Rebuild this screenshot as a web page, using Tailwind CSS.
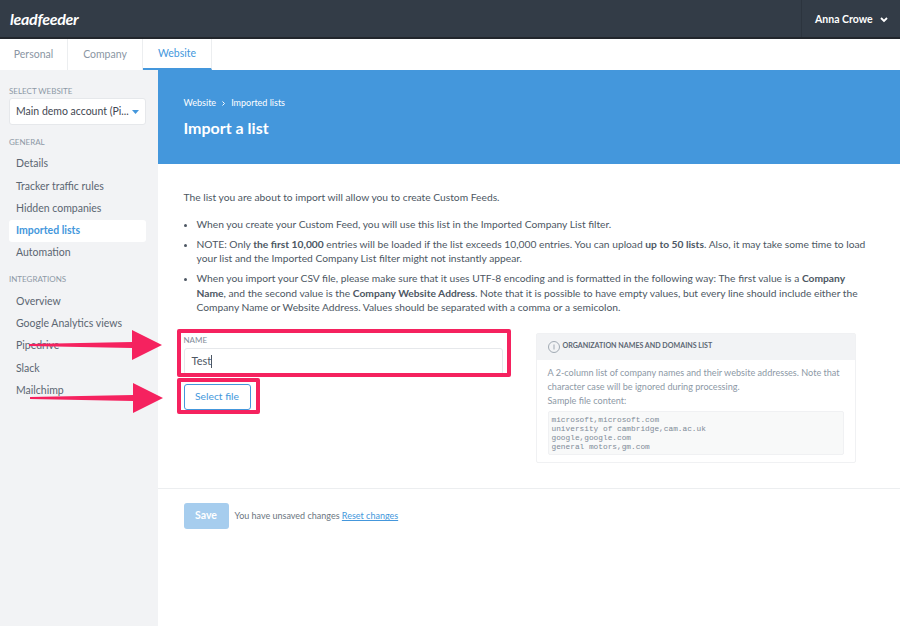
<!DOCTYPE html>
<html lang="en">
<head>
  <meta charset="UTF-8">
  <title>Import a list</title>
  <script src="https://cdn.jsdelivr.net/npm/@tailwindcss/browser@4"></script>
</head>
<body class="relative w-[900px] h-[626px] overflow-hidden bg-white font-['Lato','Liberation_Sans',sans-serif] text-[10.250px] text-[#4d5763]">
  <!-- top bar -->
  <header class="h-[39px] bg-[#333c47] border-b-2 border-[#22262c] flex items-center justify-between">
    <div class="pl-[10px] text-[16px] leading-none font-bold italic text-white tracking-[-0.3px]">leadfeeder</div>
    <div class="h-full w-[99px] border-l border-[#2c343e] flex items-center pl-[13px] pt-[2px] gap-[7px] text-white text-[10.500px] font-bold">
      Anna Crowe
      <svg width="8" height="6" viewBox="0 0 8 6" fill="none" stroke="white" stroke-width="1.8"><path d="M1 1l3 3 3-3"/></svg>
    </div>
  </header>

  <!-- tabs -->
  <nav class="h-[31px] flex text-[10.500px] bg-white">
    <div class="w-[68px] border-r border-[#eceef0] flex items-center justify-center text-[#8a96a3]">Personal</div>
    <div class="w-[75px] border-r border-[#eceef0] flex items-center justify-center text-[#8a96a3]">Company</div>
    <div class="w-[69px] border-r border-[#eceef0] border-b-2 border-b-[#4497dc] flex items-center justify-center text-[#4497dc]">Website</div>
  </nav>

  <div class="flex h-[556px]">
    <!-- sidebar -->
    <aside class="w-[157.500px] shrink-0 bg-[#f2f3f5] pt-[16px] pl-[9px] pr-[11.500px] text-[10.500px]">
      <div class="text-[8px] leading-[10px] text-[#8d99a6]">SELECT WEBSITE</div>
      <div class="mt-[2px] h-[27px] bg-white border border-[#e6e8eb] rounded-[3px] flex items-center justify-between pl-[6px] pr-[6px] text-[#3f4852]">
        <span class="whitespace-nowrap">Main demo account (Pi...</span>
        <svg width="7" height="4" viewBox="0 0 7 4" fill="#4497dc"><path d="M0 0h7L3.500 4z"/></svg>
      </div>
      <div class="mt-[12px] text-[8px] leading-[10px] text-[#8d99a6]">GENERAL</div>
      <ul class="mt-[6px] text-[#5b6672]">
        <li class="h-[22.300px] flex items-center pl-[7px]">Details</li>
        <li class="h-[22.300px] flex items-center pl-[7px]">Tracker traffic rules</li>
        <li class="h-[22.300px] flex items-center pl-[7px]">Hidden companies</li>
        <li class="h-[22.300px] flex items-center pl-[7px] bg-white rounded-[3px] text-[#4497dc] font-bold">Imported lists</li>
        <li class="h-[22.300px] flex items-center pl-[7px]">Automation</li>
      </ul>
      <div class="mt-[10px] text-[8px] leading-[10px] text-[#8d99a6]">INTEGRATIONS</div>
      <ul class="mt-[6px] text-[#5b6672]">
        <li class="h-[22.300px] flex items-center pl-[7px]">Overview</li>
        <li class="h-[22.300px] flex items-center pl-[7px]">Google Analytics views</li>
        <li class="h-[22.300px] flex items-center pl-[7px]">Pipedrive</li>
        <li class="h-[22.300px] flex items-center pl-[7px]">Slack</li>
        <li class="h-[22.300px] flex items-center pl-[7px]">Mailchimp</li>
      </ul>
    </aside>

    <!-- main -->
    <main class="flex-1">
      <section class="h-[94px] bg-[#4497dc] pl-[26px] pt-[27px] text-white">
        <div class="flex items-center gap-[6px] text-[9px] leading-[12px]">
          <span>Website</span>
          <svg width="3" height="5" viewBox="0 0 3 5" fill="none" stroke="white" stroke-width="1"><path d="M.5.500l2 2-2 2"/></svg>
          <span>Imported lists</span>
        </div>
        <h1 class="mt-[9px] text-[16px] leading-[20px] font-bold">Import a list</h1>
      </section>

      <section class="h-[325px] border-b border-[#eceef0] pl-[26px] pr-[30px] pt-[26px]">
        <p class="leading-[14.500px]">The list you are about to import will allow you to create Custom Feeds.</p>
        <ul class="mt-[12px] flex flex-col gap-[5.500px] list-disc pl-[13px] leading-[14.500px]">
          <li>When you create your Custom Feed, you will use this list in the Imported Company List filter.</li>
          <li>NOTE: Only <b>the first 10,000</b> entries will be loaded if the list exceeds 10,000 entries. You can upload <b>up to 50 lists</b>. Also, it may take some time to load your list and the Imported Company List filter might not instantly appear.</li>
          <li>When you import your CSV file, please make sure that it uses UTF-8 encoding and is formatted in the following way: The first value is a <b>Company Name</b>, and the second value is the <b>Company Website Address</b>. Note that it is possible to have empty values, but every line should include either the Company Name or Website Address. Values should be separated with a comma or a semicolon.</li>
        </ul>

        <div class="mt-[19px] flex justify-between w-[672px]">
          <div class="w-[319px] pt-[1px]">
            <div class="text-[8px] leading-[10px] text-[#7f8b98]">NAME</div>
            <div class="mt-[3px] h-[27px] border border-[#e6e8eb] rounded-[3px] flex items-center pl-[7px] text-[11px] text-[#4d5763]">Test<span class="w-px h-[13px] bg-[#4d5763]"></span></div>
            <button class="mt-[9px] w-[67px] h-[26px] border border-[#4497dc] rounded-[3px] text-[#4497dc] text-[10.300px] block">Select file</button>
          </div>
          <div class="-mt-[1px] w-[320px] h-[130px] border border-[#f0f1f3] rounded-[2px] text-[#8d99a6] text-[9.100px]">
            <div class="h-[26px] bg-[#f2f3f5] flex items-center pl-[11px] gap-[3px] text-[7.100px] font-bold text-[#5b6672]">
              <svg width="12" height="12" viewBox="0 0 12 12" fill="none" stroke="#7f8b98" stroke-width="0.7"><circle cx="6" cy="6" r="5.500"/><path d="M6 3.500v5"/></svg>
              ORGANIZATION NAMES AND DOMAINS LIST
            </div>
            <div class="px-[11px] pt-[6px]">
              <p class="leading-[14px]">A 2-column list of company names and their website addresses. Note that character case will be ignored during processing.<br>Sample file content:</p>
              <pre class="mt-[3px] h-[44px] bg-[#f8f9f9] border border-[#f0f1f3] rounded-[2px] px-[3px] pt-[4px] text-[7.800px] leading-[9px] font-['Liberation_Mono',monospace] text-[#7f8b98]">microsoft,microsoft.com
university of cambridge,cam.ac.uk
google,google.com
general motors,gm.com</pre>
            </div>
          </div>
        </div>
      </section>

      <section class="pl-[26px] pt-[14px] flex items-center gap-[6px] text-[9px] text-[#6b7580]">
        <button class="w-[45px] h-[26px] bg-[#a6cdee] rounded-[3px] text-white font-bold text-[10.500px]">Save</button>
        <span>You have unsaved changes <a class="text-[#4497dc] underline">Reset changes</a></span>
      </section>
    </main>
  </div>

  <!-- annotations drawn over the screenshot -->
  <div class="absolute left-[177px] top-[329px] w-[334px] h-[48px] border-[4px] border-[#f5225f] rounded-[2px]"></div>
  <div class="absolute left-[177px] top-[378px] w-[83px] h-[36px] border-[4px] border-[#f5225f] rounded-[2px]"></div>
  <svg class="absolute left-0 top-[320px]" width="180" height="100" viewBox="0 0 180 100" fill="#f5225f">
    <path d="M29 24l103-2-0-12 30 15-30 15-0-12-103-2z"/>
    <path d="M30 77l103-2-0-12 30 15-30 15-0-12-103-2z"/>
  </svg>
</body>
</html>
